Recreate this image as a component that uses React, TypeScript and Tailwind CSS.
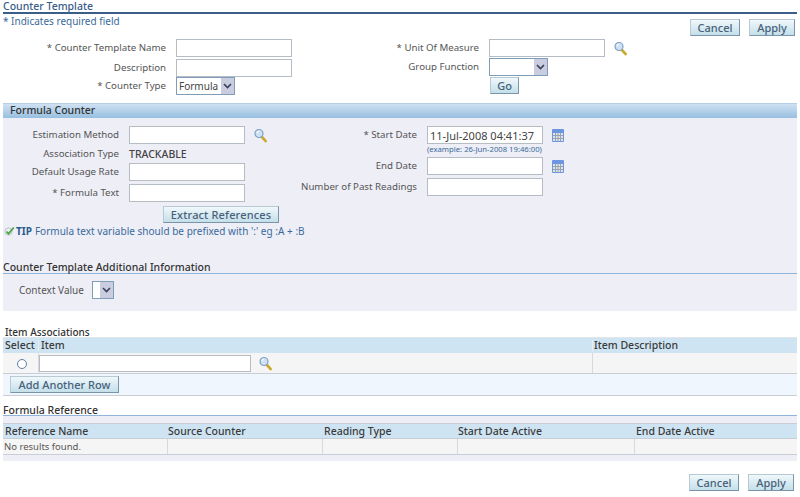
type ChildProps = { children?: React.ReactNode };

const Search = () => (
  <svg width="14" height="15" viewBox="0 0 14 15" className="shrink-0">
    <path d="M7.5 8.5l4.2 4.6" stroke="#c9a92c" strokeWidth="2.6" strokeLinecap="round" />
    <circle cx="5" cy="5.5" r="4" fill="#cfe2f5" stroke="#7f9fc4" strokeWidth="1.2" />
    <path d="M3 5c.3-1.1 1-1.7 2-1.8" stroke="#ffffff" strokeWidth="1.1" fill="none" />
  </svg>
);

const Calendar = () => (
  <svg width="12" height="13" viewBox="0 0 12 13" className="shrink-0">
    <rect x="0" y="0" width="12" height="13" rx="1" fill="#6d95e0" />
    <rect x="1" y="4" width="10" height="8" fill="#dfe4ea" />
    <path d="M1 6.5h10M1 9.5h10M3.5 4v8M6 4v8M8.5 4v8" stroke="#9aa3ad" strokeWidth="1" />
  </svg>
);

const Check = () => (
  <svg width="11" height="10" viewBox="0 0 11 10" className="shrink-0">
    <circle cx="4.5" cy="5.5" r="3.6" fill="none" stroke="#b8c0c8" strokeWidth="1" />
    <path d="M2.5 5.5l2 2.2L9.8 1.5" fill="none" stroke="#3fa535" strokeWidth="1.7" />
  </svg>
);

const Btn = ({ children, className = "" }: ChildProps & { className?: string }) => (
  <button
    type="button"
    className={`flex items-center justify-center border border-t-[#b9c9d4] border-l-[#b9c9d4] border-r-[#7a95aa] border-b-[#7a95aa] bg-gradient-to-b from-[#f0f8fb] to-[#c4dfe9] text-[11px] font-medium text-[#47617a] ${className}`}
  >
    {children}
  </button>
);

const Input = ({ value = "", className = "w-[116px] h-[18px]" }: { value?: string; className?: string }) => (
  <div className={`flex items-center border border-[#b5bcc4] bg-white px-[2px] text-[11px] text-[#444444] ${className}`}>{value}</div>
);

const Select = ({ value = "", width }: { value?: string; width: string }) => (
  <div className={`flex h-[18px] items-center justify-between border border-[#7f9db9] bg-white pl-[2px] text-[10px] text-[#444444] ${width}`}>
    <span>{value}</span>
    <span className="flex h-full w-[13px] items-center justify-center bg-[#c9cddf]">
      <svg width="9" height="6" viewBox="0 0 9 6">
        <path d="M1 1l3.5 3.5L8 1" fill="none" stroke="#3a3f5c" strokeWidth="1.6" />
      </svg>
    </span>
  </div>
);

const Row = ({ label, width, children }: ChildProps & { label: string; width: string }) => (
  <div className="flex h-[18px] items-center gap-[10px]">
    <span className={`whitespace-nowrap pb-[1px] text-right text-[9.7px] text-[#555555] ${width}`}>{label}</span>
    {children}
  </div>
);

const Heading = ({ children }: ChildProps) => (
  <div className="text-[10.5px] font-medium leading-[12px] text-[#333333]">{children}</div>
);

const App = () => (
  <div className="h-[497px] w-[800px] overflow-hidden bg-white px-[3px] font-['Noto_Sans',sans-serif] leading-none">
    <div className="h-[14px] border-b-2 border-[#3a5d8a] text-[10.5px] font-medium leading-[13px] text-[#3a5d8a]">Counter Template</div>

    <div className="flex h-[25px] items-start justify-between pt-[5px] pr-[2px]">
      <span className="mt-[-3px] text-[10px] text-[#3a6a9a]">* Indicates required field</span>
      <div className="flex gap-[9px]">
        <Btn className="h-[17px] w-[50px]">Cancel</Btn>
        <Btn className="h-[17px] w-[46px]">Apply</Btn>
      </div>
    </div>

    <div className="flex h-[64px]">
      <div className="flex w-[289px] flex-col">
        <Row label="* Counter Template Name" width="w-[163px]"><Input /></Row>
        <div className="h-[2px]" />
        <Row label="Description" width="w-[163px]"><Input /></Row>
        <Row label="* Counter Type" width="w-[163px]"><Select value="Formula" width="w-[59px]" /></Row>
      </div>
      <div className="flex flex-col gap-[1px]">
        <Row label="* Unit Of Measure" width="w-[187px]">
          <Input />
          <span className="ml-[-1px]"><Search /></span>
        </Row>
        <Row label="Group Function" width="w-[187px]"><Select width="w-[59px]" /></Row>
        <div className="ml-[198px]"><Btn className="h-[17px] w-[29px]">Go</Btn></div>
      </div>
    </div>

    <div className="flex h-[15px] items-center border-t border-[#b4cfe6] bg-gradient-to-b from-[#cfe2f3] to-[#97bfe0] pb-[1px] pl-[7px] text-[10.5px] font-medium text-[#333333]">
      Formula Counter
    </div>

    <div className="h-[193px] bg-[#eeeef7]">
      <div className="flex pt-[8px]">
        <div className="flex w-[298px] flex-col">
          <Row label="Estimation Method" width="w-[116px]">
            <Input />
            <span className="ml-[-1px]"><Search /></span>
          </Row>
          <div className="h-[1px]" />
          <Row label="Association Type" width="w-[116px]">
            <span className="text-[10.5px] font-medium text-[#444444]">TRACKABLE</span>
          </Row>
          <Row label="Default Usage Rate" width="w-[116px]"><Input /></Row>
          <div className="h-[3px]" />
          <Row label="* Formula Text" width="w-[116px]"><Input /></Row>
          <div className="ml-[160px] mt-[4px]"><Btn className="h-[17px] w-[116px] tracking-[0.15px]">Extract References</Btn></div>
        </div>
        <div className="flex flex-col">
          <Row label="* Start Date" width="w-[116px]">
            <Input value="11-Jul-2008 04:41:37" />
            <span className="ml-[-1px]"><Calendar /></span>
          </Row>
          <div className="ml-[126px] h-[13px] whitespace-nowrap pt-[2px] text-[7.7px] text-[#3a6a9a]">(example: 26-Jun-2008 19:46:00)</div>
          <Row label="End Date" width="w-[116px]">
            <Input />
            <span className="ml-[-1px]"><Calendar /></span>
          </Row>
          <div className="h-[3px]" />
          <Row label="Number of Past Readings" width="w-[116px]"><Input /></Row>
        </div>
      </div>
      <div className="mt-[3px] flex items-center gap-[1px] pl-[1px] text-[10px] text-[#3a6a9a]">
        <Check />
        <span className="font-bold text-[#2a5a8a]">TIP</span>
        <span className="ml-[2px] tracking-[0.02px]">Formula text variable should be prefixed with ':' eg :A + :B</span>
      </div>

      <div className="mt-[25px] h-[13px] border-b border-[#8fb6da]">
        <Heading>Counter Template Additional Information</Heading>
      </div>
      <div className="flex h-[38px] items-start gap-[9px] pt-[7px] pl-[16px]">
        <span className="flex h-[18px] w-[64px] items-center whitespace-nowrap text-[10px] text-[#555555]">Context Value</span>
        <Select width="w-[22px]" />
      </div>
    </div>

    <div className="mt-[16px] h-[10px] pl-[2px] text-[10px] font-medium text-[#333333]">Item Associations</div>

    <div className="grid h-[16px] grid-cols-[35px_554px_1fr] items-center border-t border-[#e2e6ea] bg-[#cfe4f3] text-[10.5px] font-medium text-[#3a3a3a]">
      <span className="pl-[2px]">Select</span>
      <span className="border-l border-[#e8f0f5] pl-[2px]">Item</span>
      <span className="border-l border-[#e8f0f5] pl-[1px]">Item Description</span>
    </div>
    <div className="grid h-[21px] grid-cols-[35px_554px_1fr] border-b border-[#c8cdd6] bg-[#f5f5f5]">
      <div className="flex items-center justify-center pt-[1px]">
        <span className="ml-[2px] h-[10px] w-[10px] rounded-full border border-[#5a7fa8] bg-white" />
      </div>
      <div className="flex items-center gap-[8px] border-l border-[#d5d9e0] pt-[1px]">
        <Input className="h-[17px] w-[212px]" />
        <Search />
      </div>
      <div className="border-l border-[#d5d9e0]" />
    </div>
    <div className="flex h-[22px] items-center border-b border-[#c8cdd6] bg-[#eff6fd] pl-[7px]">
      <Btn className="h-[17px] w-[109px]">Add Another Row</Btn>
    </div>

    <div className="mt-[8px] h-[12px] border-b border-[#8fb6da]">
      <Heading>Formula Reference</Heading>
    </div>
    <div className="h-[7px] bg-[#eeeef7]" />
    <div className="grid h-[15px] grid-cols-[164px_155px_135px_177px_1fr] items-center border-t border-[#c8cdd6] bg-[#cfe4f3] text-[10.5px] font-medium text-[#3a3a3a]">
      <span className="pl-[2px]">Reference Name</span>
      <span className="pl-[1px]">Source Counter</span>
      <span className="pl-[2px]">Reading Type</span>
      <span className="pl-[1px]">Start Date Active</span>
      <span className="pl-[2px]">End Date Active</span>
    </div>
    <div className="grid h-[17px] grid-cols-[164px_155px_135px_177px_1fr] border-t border-b border-[#c8cdd6] bg-[#f5f5f5] text-[9.5px] text-[#555555]">
      <span className="flex items-center pl-[1px]">No results found.</span>
      <span className="border-l border-[#d5d9e0]" />
      <span className="border-l border-[#d5d9e0]" />
      <span className="border-l border-[#d5d9e0]" />
      <span className="border-l border-[#d5d9e0]" />
    </div>
    <div className="h-[6px] bg-[#eeeef7]" />

    <div className="mt-[13px] flex justify-end gap-[9px] pr-[3px]">
      <Btn className="h-[17px] w-[50px]">Cancel</Btn>
      <Btn className="h-[17px] w-[46px]">Apply</Btn>
    </div>
  </div>
);

export default App;
